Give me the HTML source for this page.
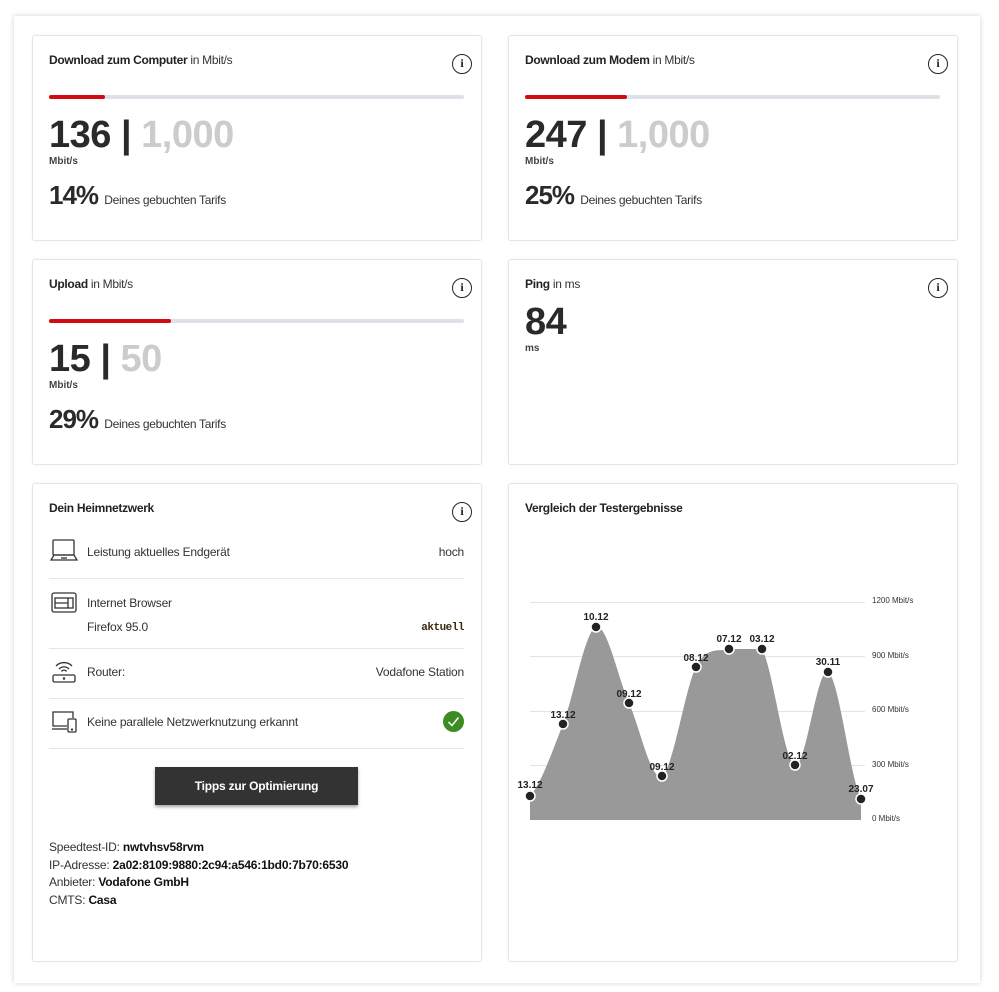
<!DOCTYPE html>
<html><head><meta charset="utf-8"><style>
*{margin:0;padding:0;box-sizing:border-box}
body{width:999px;height:992px;background:#fff;font-family:"Liberation Sans",sans-serif;color:#333;position:relative;overflow:hidden}
.outer{position:absolute;left:14px;top:16px;width:966px;height:967px;background:#fff;box-shadow:0 0 5px rgba(0,0,0,.18)}
.card{position:absolute;background:#fff;border:1px solid #e6e6e6;border-radius:3px;box-shadow:0 0 2px rgba(0,0,0,.06)}
.a{position:absolute;white-space:nowrap}
.r{position:absolute;white-space:nowrap;text-align:right}
.t{font-size:12px;letter-spacing:-.3px}
.t b{color:#222}
.info{position:absolute;width:20px;height:20px;border:1.5px solid #222;border-radius:50%;font:bold 12px "Liberation Serif",serif;text-align:center;line-height:17px;color:#222}
.bar{position:absolute;height:4px;background:#dde1e8;border-radius:2px}
.bar i{position:absolute;left:0;top:0;height:4px;background:#d20a11;border-radius:2px}
.big{font-size:38px;font-weight:bold;color:#2a2a2a;letter-spacing:-.5px}
.big span{color:#ccc}
.unit{font-size:10px;font-weight:bold;color:#444}
.pct{font-size:26px;font-weight:bold;color:#2a2a2a;letter-spacing:-1px}
.pct small{font-size:12px;font-weight:normal;color:#333;letter-spacing:-.3px}
.row{font-size:12px;color:#333;letter-spacing:-.2px}
.hr{position:absolute;left:49px;width:415px;height:1px;background:#e6e6e6}
</style></head><body>
<div class="outer"></div>

<div class="card" style="left:32px;top:35px;width:450px;height:206px"></div>
<div class="a t" style="left:49px;top:53px"><b>Download zum Computer</b> in Mbit/s</div>
<div class="info" style="left:452px;top:54px">i</div>
<div class="bar" style="left:49px;top:95px;width:415px"><i style="width:56px"></i></div>
<div class="a big" style="left:49px;top:114px">136 | <span>1,000</span></div>
<div class="a unit" style="left:49px;top:156px">Mbit/s</div>
<div class="a pct" style="left:49px;top:180px">14% <small>Deines gebuchten Tarifs</small></div>

<div class="card" style="left:508px;top:35px;width:450px;height:206px"></div>
<div class="a t" style="left:525px;top:53px"><b>Download zum Modem</b> in Mbit/s</div>
<div class="info" style="left:928px;top:54px">i</div>
<div class="bar" style="left:525px;top:95px;width:415px"><i style="width:102px"></i></div>
<div class="a big" style="left:525px;top:114px">247 | <span>1,000</span></div>
<div class="a unit" style="left:525px;top:156px">Mbit/s</div>
<div class="a pct" style="left:525px;top:180px">25% <small>Deines gebuchten Tarifs</small></div>

<div class="card" style="left:32px;top:259px;width:450px;height:206px"></div>
<div class="a t" style="left:49px;top:277px"><b>Upload</b> in Mbit/s</div>
<div class="info" style="left:452px;top:278px">i</div>
<div class="bar" style="left:49px;top:319px;width:415px"><i style="width:122px"></i></div>
<div class="a big" style="left:49px;top:338px">15 | <span>50</span></div>
<div class="a unit" style="left:49px;top:380px">Mbit/s</div>
<div class="a pct" style="left:49px;top:404px">29% <small>Deines gebuchten Tarifs</small></div>

<div class="card" style="left:508px;top:259px;width:450px;height:206px"></div>
<div class="a t" style="left:525px;top:277px"><b>Ping</b> in ms</div>
<div class="info" style="left:928px;top:278px">i</div>
<div class="a big" style="left:525px;top:301px">84</div>
<div class="a unit" style="left:525px;top:343px">ms</div>

<div class="card" style="left:32px;top:483px;width:450px;height:479px"></div>
<div class="a t" style="left:49px;top:501px"><b>Dein Heimnetzwerk</b></div>
<div class="info" style="left:452px;top:502px">i</div>
<svg class="a" style="left:50px;top:539px" width="28" height="24" viewBox="0 0 28 24" fill="none" stroke="#333" stroke-width="1.3"><rect x="3" y="1" width="21" height="15" rx="1"/><path d="M1 21h26l-3-5H4z"/><path d="M11 19h6"/></svg>
<div class="a row" style="left:87px;top:545px">Leistung aktuelles Endgerät</div>
<div class="r row" style="right:535px;top:545px">hoch</div>
<div class="hr" style="top:578px"></div>
<svg class="a" style="left:51px;top:592px" width="26" height="22" viewBox="0 0 26 22" fill="none" stroke="#333" stroke-width="1.3"><rect x="1" y="1" width="24" height="19" rx="2"/><rect x="4" y="6" width="18" height="10"/><path d="M4 11h13M17 6v10"/></svg>
<div class="a row" style="left:87px;top:596px">Internet Browser</div>
<div class="a row" style="left:87px;top:620px">Firefox 95.0</div>
<div class="r" style="right:535px;top:622px;font:bold 11px 'Liberation Mono',monospace;color:#3a2a10;letter-spacing:-.5px">aktuell</div>
<div class="hr" style="top:648px"></div>
<svg class="a" style="left:51px;top:658px" width="26" height="26" viewBox="0 0 26 26" fill="none" stroke="#333" stroke-width="1.3"><path d="M5 8a11 11 0 0 1 16 0M8 11a7 7 0 0 1 10 0M10.5 13.5a3 3 0 0 1 5 0"/><rect x="2" y="17" width="22" height="7" rx="1.5"/><circle cx="13" cy="20.5" r=".6" fill="#333"/></svg>
<div class="a row" style="left:87px;top:665px">Router:</div>
<div class="r row" style="right:535px;top:665px">Vodafone Station</div>
<div class="hr" style="top:698px"></div>
<svg class="a" style="left:51px;top:710px" width="27" height="24" viewBox="0 0 27 24" fill="none" stroke="#333" stroke-width="1.3"><path d="M16 16H2V2h20v6"/><path d="M1 19h15"/><rect x="17" y="9" width="8" height="13" rx="1"/><circle cx="21" cy="19.5" r=".5" fill="#333"/></svg>
<div class="a row" style="left:87px;top:715px">Keine parallele Netzwerknutzung erkannt</div>
<svg class="a" style="left:443px;top:711px" width="21" height="21" viewBox="0 0 21 21"><circle cx="10.5" cy="10.5" r="10.5" fill="#3d8b23"/><path d="M5.5 11l3.5 3.5 6.5-8" fill="none" stroke="#fff" stroke-width="1.5"/></svg>
<div class="hr" style="top:748px"></div>
<div class="a" style="left:155px;top:767px;width:203px;height:38px;background:#333;box-shadow:0 2px 3px rgba(0,0,0,.35);color:#fff;font-weight:bold;font-size:12px;text-align:center;line-height:38px;letter-spacing:-.2px">Tipps zur Optimierung</div>
<div class="a row" style="left:49px;top:839px;line-height:17.5px;color:#333">Speedtest-ID: <b style="color:#111">nwtvhsv58rvm</b><br>IP-Adresse: <b style="color:#111">2a02:8109:9880:2c94:a546:1bd0:7b70:6530</b><br>Anbieter: <b style="color:#111">Vodafone GmbH</b><br>CMTS: <b style="color:#111">Casa</b></div>

<div class="card" style="left:508px;top:483px;width:450px;height:479px"></div>
<div class="a t" style="left:525px;top:501px"><b>Vergleich der Testergebnisse</b></div>
<svg class="a" style="left:0;top:0" width="999" height="992">
<g stroke="#e4e4e4" stroke-width="1"><path d="M530 602.5H865M530 656.5H865M530 711.5H865M530 765.5H865"/></g>
<path fill="#999" d="M530 820V796C541,784 552,752.2 563,724C574,695.8 585,630.5 596,627C607,623.5 618,678.2 629,703C640,727.8 651,782 662,776C673,770 685,688.2 696,667C707,645.8 718,652 729,649C740,649 751,649 762,649C773,668.3 784,761.2 795,765C806,768.8 817,666.3 828,672C839,677.7 850,777.8 861,799V820Z"/>
<g fill="#222" stroke="#fff" stroke-width="1.5">
<circle cx="530" cy="796" r="5"/><circle cx="563" cy="724" r="5"/><circle cx="596" cy="627" r="5"/><circle cx="629" cy="703" r="5"/><circle cx="662" cy="776" r="5"/><circle cx="696" cy="667" r="5"/><circle cx="729" cy="649" r="5"/><circle cx="762" cy="649" r="5"/><circle cx="795" cy="765" r="5"/><circle cx="828" cy="672" r="5"/><circle cx="861" cy="799" r="5"/>
</g>
<g font-family="Liberation Sans" font-size="10" font-weight="bold" fill="#222" text-anchor="middle">
<text x="530" y="788">13.12</text><text x="563" y="718">13.12</text><text x="596" y="620">10.12</text><text x="629" y="697">09.12</text><text x="662" y="770">09.12</text><text x="696" y="661">08.12</text><text x="729" y="642">07.12</text><text x="762" y="642">03.12</text><text x="795" y="759">02.12</text><text x="828" y="665">30.11</text><text x="861" y="792">23.07</text>
</g>
<g font-family="Liberation Sans" font-size="8" fill="#333">
<text x="872" y="603">1200 Mbit/s</text><text x="872" y="658">900 Mbit/s</text><text x="872" y="712">600 Mbit/s</text><text x="872" y="767">300 Mbit/s</text><text x="872" y="821">0 Mbit/s</text>
</g>
</svg>
</body></html>
